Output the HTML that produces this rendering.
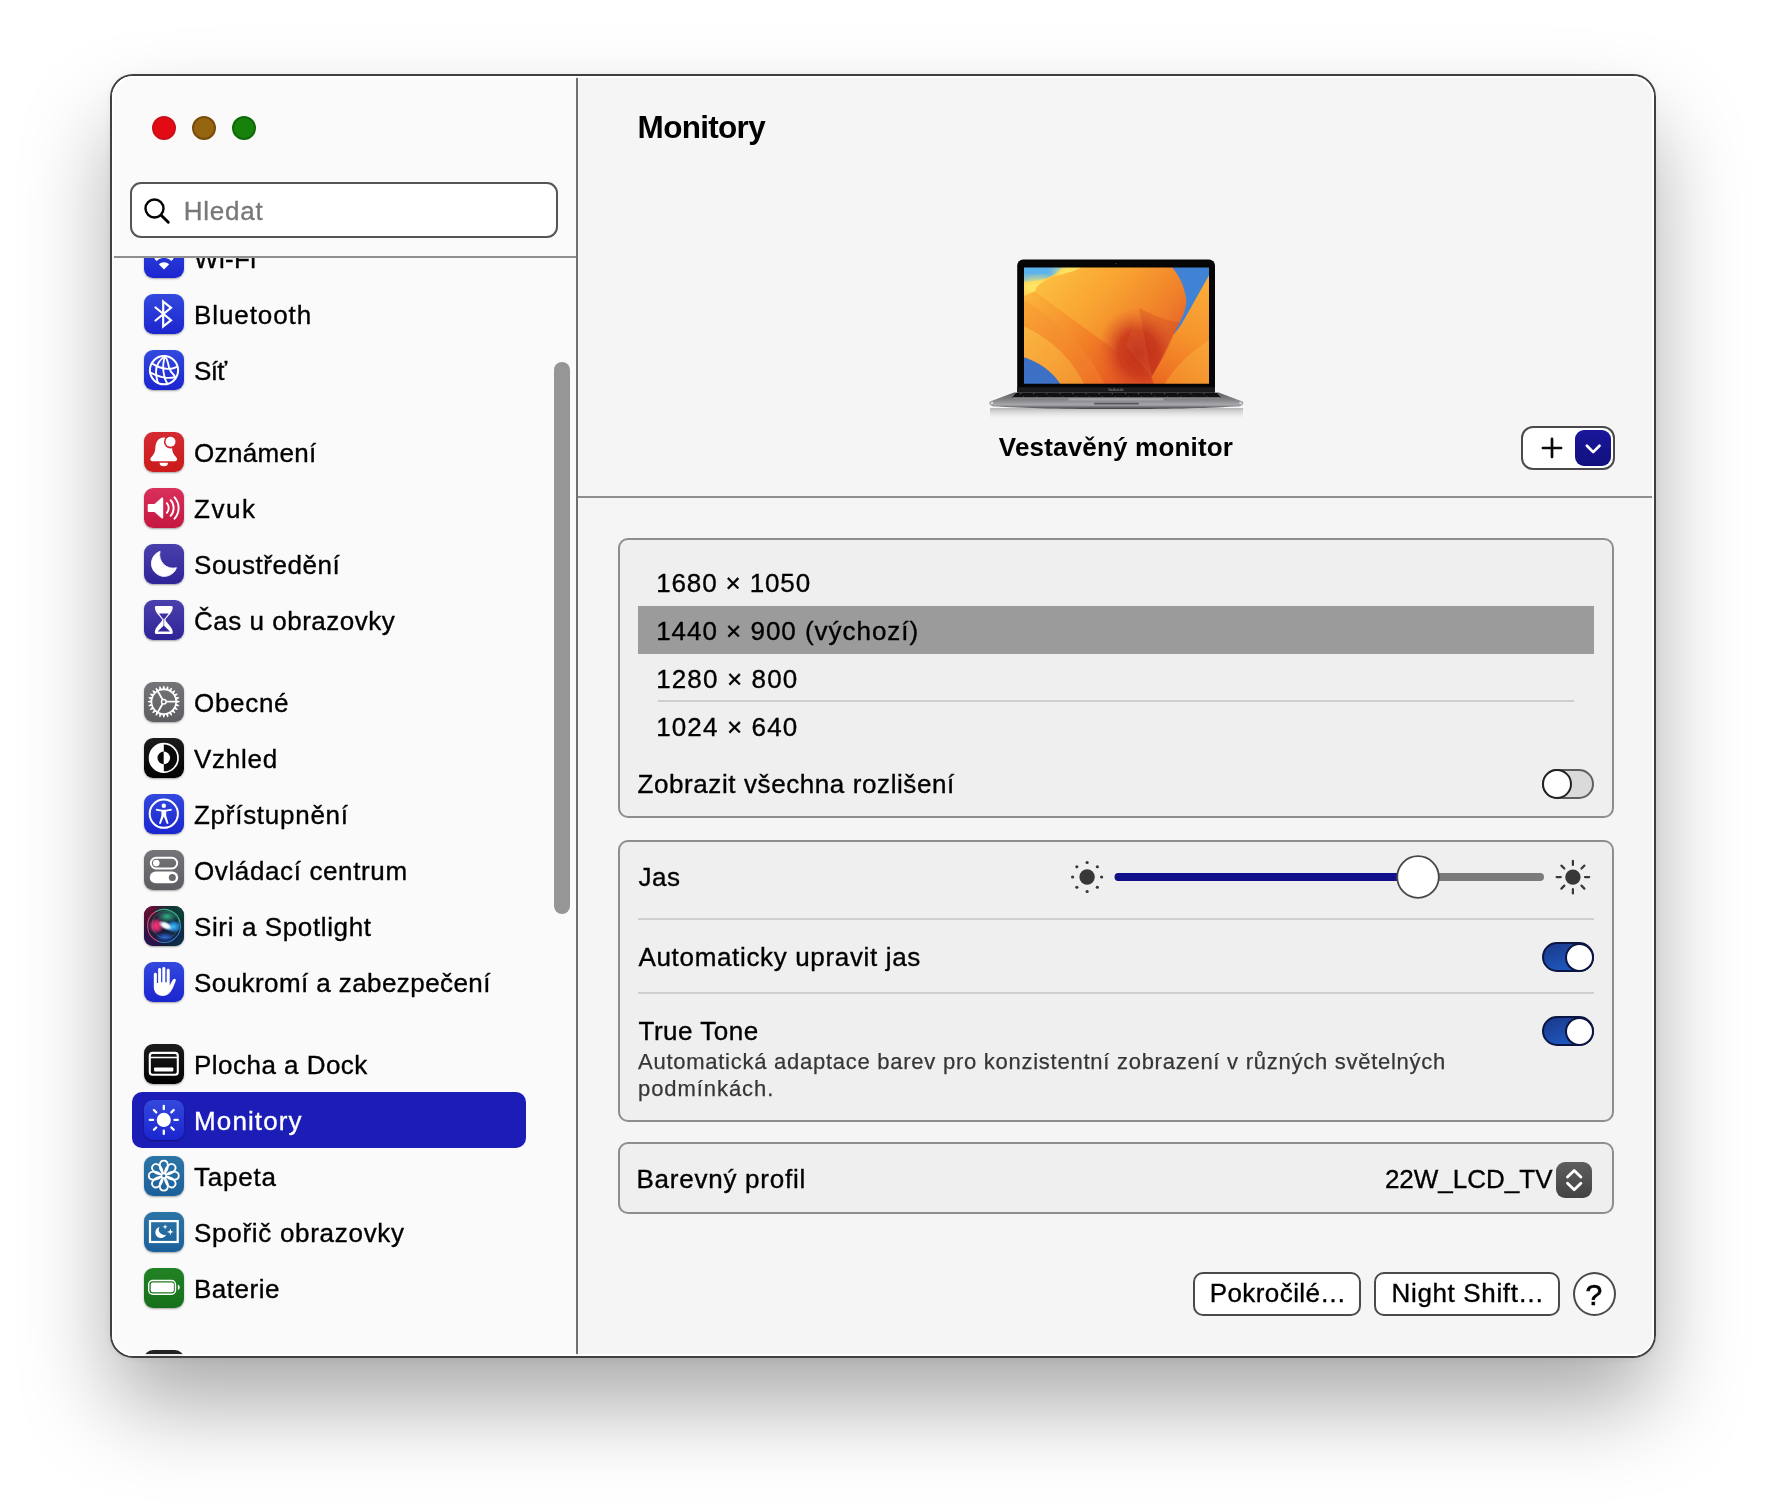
<!DOCTYPE html>
<html lang="cs">
<head>
<meta charset="utf-8">
<title>Monitory</title>
<style>
*{box-sizing:border-box;margin:0;padding:0}
html,body{width:1766px;height:1504px;background:#fff;overflow:hidden}
body{font-family:"Liberation Sans",sans-serif;color:#000;position:relative;-webkit-text-stroke:.35px currentColor}
.abs{position:absolute}
#shadow{position:absolute;left:110px;top:74px;width:1546px;height:1284px;border-radius:23px;
 box-shadow:0 1px 6px rgba(0,0,0,.06),0 49px 90px -4px rgba(0,0,0,.34)}
#win{will-change:transform;position:absolute;left:110px;top:74px;width:1546px;height:1284px;border-radius:23px;border:2px solid #404040;background:#f5f5f5;overflow:hidden}
#side{position:absolute;left:0;top:0;width:464px;height:1280px;background:#fafafa}
#vdiv{position:absolute;left:464px;top:0;width:2px;height:1280px;background:#707070}
.tl{position:absolute;top:40px;width:24px;height:24px;border-radius:50%}
#search{position:absolute;left:18px;top:106px;width:428px;height:56px;border:2px solid #555;border-radius:11px;background:#fff}
#search span{position:absolute;left:51.700px;top:12px;font-size:26px;color:#787878;letter-spacing:.76px}
#sdiv{position:absolute;left:0;top:180px;width:464px;height:2px;background:#8f8f8f}
#list{position:absolute;left:0;top:182px;width:464px;height:1098px;overflow:hidden}
.row{position:absolute;left:20px;width:394px;height:56px;border-radius:10px}
.row .ic{position:absolute;left:12px;top:8px;width:40px;height:40px;border-radius:9px;overflow:hidden;box-shadow:0 1px 2px rgba(0,0,0,.35)}
.row .ic svg{position:absolute;left:0;top:0;width:40px;height:40px}
.row .t{position:absolute;left:62px;top:13px;font-size:26px;line-height:32px;white-space:nowrap;letter-spacing:.35px}
.row.sel{background:#1c1cb6}
.row.sel .t{color:#fff}
#scroll{position:absolute;left:442px;top:286px;width:16px;height:552px;border-radius:8px;background:#969696}
#main{position:absolute;left:466px;top:0;width:1076px;height:1280px;background:#f5f5f5}
.grp{position:absolute;left:40px;width:996px;border:2px solid #8e8e8e;border-radius:10px;background:#efefef}
.lbl{position:absolute;font-size:26px;line-height:32px;white-space:nowrap;letter-spacing:.35px}
.hl{position:absolute;height:2px;background:#cfcfcf}
.tog{position:absolute;width:52px;height:30px;border-radius:15px}
.tog i{position:absolute;top:2px;width:27px;height:27px;border-radius:50%;background:#fff}
.btn{position:absolute;height:43px;border:2px solid #4a4a4a;border-radius:10px;background:#fff;font-size:26px;line-height:37px;text-align:center;white-space:nowrap;letter-spacing:.3px}
.el{letter-spacing:-1.6px;margin-left:-.5px}
#hi{position:absolute;left:0;top:0;width:1542px;height:1280px;border-radius:21px;box-shadow:inset 0 0 0 2px rgba(255,255,255,.92);z-index:9}
</style>
</head>
<body>
<div id="shadow"></div>
<div id="win">
 <div id="side">
  <div class="tl" style="left:40px;background:#e30b13;border:2px solid #cd0e18"></div>
  <div class="tl" style="left:80px;background:#94640f;border:2px solid #7a4c0b"></div>
  <div class="tl" style="left:120px;background:#16820b;border:2px solid #106a08"></div>
  <div id="search">
   <svg class="abs" style="left:9.800px;top:11.600px" width="30" height="30" viewBox="0 0 30 30"><circle cx="12.500" cy="12.500" r="9" fill="none" stroke="#000" stroke-width="2.400"/><path d="M19.200 19.200 L26.300 26.300" stroke="#000" stroke-width="2.900" stroke-linecap="round"/></svg>
   <span>Hledat</span>
  </div>
  <div id="sdiv"></div>
  <div id="list">
   <div class="row" style="top:-28px"><div class="ic"><svg viewBox="0 0 40 40"><defs><linearGradient id="gw" x1="0" y1="0" x2="0" y2="1"><stop offset="0" stop-color="#3349dd"/><stop offset="1" stop-color="#1b25cf"/></linearGradient></defs><rect width="40" height="40" fill="url(#gw)"/><g fill="none" stroke="#fff" stroke-width="3.2" stroke-linecap="butt"><path d="M6.5 16.5 A19 19 0 0 1 33.5 16.5"/><path d="M11.5 21.8 A12 12 0 0 1 28.5 21.8"/></g><path d="M20 31.5 L14.8 26.3 A7.4 7.4 0 0 1 25.2 26.3 Z" fill="#fff"/></svg></div><div class="t" style="letter-spacing:0.35px">Wi-Fi</div></div>
   <div class="row" style="top:28px"><div class="ic"><svg viewBox="0 0 40 40"><defs><linearGradient id="gb" x1="0" y1="0" x2="0" y2="1"><stop offset="0" stop-color="#3349dd"/><stop offset="1" stop-color="#1b25cf"/></linearGradient></defs><rect width="40" height="40" fill="url(#gb)"/><path d="M11.5 13.5 L27 26.2 L19.2 32.5 L19.2 7.5 L27 13.8 L11.5 26.5" fill="none" stroke="#fff" stroke-width="2.2" stroke-linejoin="miter" stroke-linecap="round"/></svg></div><div class="t" style="letter-spacing:0.92px">Bluetooth</div></div>
   <div class="row" style="top:84px"><div class="ic"><svg viewBox="0 0 40 40"><defs><linearGradient id="gn" x1="0" y1="0" x2="0" y2="1"><stop offset="0" stop-color="#3349dd"/><stop offset="1" stop-color="#1b25cf"/></linearGradient></defs><rect width="40" height="40" fill="url(#gn)"/><g fill="none" stroke="#fff" stroke-width="1.900" stroke-linecap="round"><circle cx="20" cy="20.200" r="14.100" stroke-width="2"/><path d="M21.100 6.300 C16.500 9 11.500 15 12 22 C12.300 27 13 30.500 14.200 33"/><path d="M21.100 6.300 C19.500 10 18.800 16 19.500 22 C20 27 21.500 31 23.200 33.600"/><path d="M21.100 6.300 C23.500 9.500 24.300 14 25 17.500 C26 21.500 28.500 24 30.500 25.800"/><path d="M8 13.400 C12.500 16.500 18 18.600 23.500 18.900 C27.500 19 30.500 18 33 16.800"/><path d="M5.900 22.400 C11 25 16.500 27.200 22 27.800 C25.500 28.100 28.500 27.800 31.300 27"/></g></svg></div><div class="t" style="letter-spacing:-0.66px">Síť</div></div>
   <div class="row" style="top:166px"><div class="ic"><svg viewBox="0 0 40 40"><defs><linearGradient id="gbe" x1="0" y1="0" x2="0" y2="1"><stop offset="0" stop-color="#d42a32"/><stop offset="1" stop-color="#cb1b1a"/></linearGradient></defs><rect width="40" height="40" fill="url(#gbe)"/><path d="M19.700 5.400 C14 5.400 11.600 10.500 11.400 15.500 C11.200 20 10 22.500 7 25.600 C5.800 26.900 6.200 29.200 8.200 29.200 H31.200 C33.200 29.200 33.600 26.900 32.400 25.600 C29.400 22.500 28.200 20 28 15.500 C27.800 10.500 25.400 5.400 19.700 5.400 Z" fill="#fff"/><path d="M15.600 30.800 h8.400 a4.200 3.500 0 0 1 -8.400 0 z" fill="#fff"/><circle cx="26.500" cy="9.800" r="6.600" fill="#d1252c"/><circle cx="26.500" cy="9.800" r="5" fill="#fff"/></svg></div><div class="t" style="letter-spacing:0.34px">Oznámení</div></div>
   <div class="row" style="top:222px"><div class="ic"><svg viewBox="0 0 40 40"><defs><linearGradient id="gs" x1="0" y1="0" x2="0" y2="1"><stop offset="0" stop-color="#d9305c"/><stop offset="1" stop-color="#c4183f"/></linearGradient></defs><rect width="40" height="40" fill="url(#gs)"/><path d="M5 16 h5.5 l7 -6.200 c.8 -.7 1.700 -.3 1.700 .8 v18.800 c0 1.100 -.9 1.500 -1.700 .8 l-7 -6.200 h-5.500 c-.8 0 -1.300 -.5 -1.300 -1.300 v-5.400 c0 -.8 .5 -1.300 1.300 -1.300 z" fill="#fff"/><g fill="none" stroke="#fff" stroke-width="1.9" stroke-linecap="round"><path d="M22.800 15.200 a7 7 0 0 1 0 9.600"/><path d="M26.600 12.200 a11.500 11.500 0 0 1 0 15.600"/><path d="M30.500 9.300 a16 16 0 0 1 0 21.400"/></g></svg></div><div class="t" style="letter-spacing:1.52px">Zvuk</div></div>
   <div class="row" style="top:278px"><div class="ic"><svg viewBox="0 0 40 40"><defs><linearGradient id="gm" x1="0" y1="0" x2="0" y2="1"><stop offset="0" stop-color="#4a40ac"/><stop offset="1" stop-color="#2f2498"/></linearGradient></defs><rect width="40" height="40" fill="url(#gm)"/><path d="M16.100 7.300 A12.900 12.900 0 1 0 32.500 23.700 A13.400 13.400 0 0 1 16.100 7.300 Z" fill="#fff" stroke="#fff" stroke-width=".8" stroke-linejoin="round"/></svg></div><div class="t" style="letter-spacing:0.56px">Soustředění</div></div>
   <div class="row" style="top:334px"><div class="ic"><svg viewBox="0 0 40 40"><defs><linearGradient id="gh" x1="0" y1="0" x2="0" y2="1"><stop offset="0" stop-color="#4a40ac"/><stop offset="1" stop-color="#2f2498"/></linearGradient></defs><rect width="40" height="40" fill="url(#gh)"/><path d="M12.300 5.900 H27.300 Q29 5.900 28.800 7.600 C28.400 13 23.200 16.500 21.300 20 C23.200 23.500 28.400 27 28.800 32.200 Q29 33.900 27.300 33.900 H12.300 Q10.600 33.900 10.800 32.200 C11.200 27 16.400 23.500 18.300 20 C16.400 16.500 11.200 13 10.800 7.600 Q10.600 5.900 12.300 5.900 Z" fill="#fff"/><path d="M15 13.600 H24.600 L20.700 18.700 H18.900 Z" fill="#3a2fa0"/><path d="M19.800 18.500 V26" stroke="#3a2fa0" stroke-width=".7" opacity=".8"/><path d="M19.800 25.600 L26 31.400 H13.600 Z" fill="#34289c"/></svg></div><div class="t" style="letter-spacing:0.51px">Čas u obrazovky</div></div>
   <div class="row" style="top:416px"><div class="ic"><svg viewBox="0 0 40 40"><defs><linearGradient id="gg" gradientUnits="userSpaceOnUse" x1="0" y1="0" x2="0" y2="40"><stop offset="0" stop-color="#747479"/><stop offset="1" stop-color="#5d5d62"/></linearGradient></defs><rect width="40" height="40" fill="url(#gg)"/><path d="M32.73 18.34 L35.70 19.30 L35.70 20.10 L32.73 21.06 L32.64 21.73 L35.26 23.43 L35.05 24.20 L31.94 24.36 L31.68 24.98 L33.76 27.30 L33.37 27.99 L30.32 27.34 L29.91 27.88 L31.32 30.66 L30.76 31.22 L27.98 29.81 L27.44 30.22 L28.09 33.27 L27.40 33.66 L25.08 31.58 L24.46 31.84 L24.30 34.95 L23.53 35.16 L21.83 32.54 L21.16 32.63 L20.20 35.60 L19.40 35.60 L18.44 32.63 L17.77 32.54 L16.07 35.16 L15.30 34.95 L15.14 31.84 L14.52 31.58 L12.20 33.66 L11.51 33.27 L12.16 30.22 L11.62 29.81 L8.84 31.22 L8.28 30.66 L9.69 27.88 L9.28 27.34 L6.23 27.99 L5.84 27.30 L7.92 24.98 L7.66 24.36 L4.55 24.20 L4.34 23.43 L6.96 21.73 L6.87 21.06 L3.90 20.10 L3.90 19.30 L6.87 18.34 L6.96 17.67 L4.34 15.97 L4.55 15.20 L7.66 15.04 L7.92 14.42 L5.84 12.10 L6.23 11.41 L9.28 12.06 L9.69 11.52 L8.28 8.74 L8.84 8.18 L11.62 9.59 L12.16 9.18 L11.51 6.13 L12.20 5.74 L14.52 7.82 L15.14 7.56 L15.30 4.45 L16.07 4.24 L17.77 6.86 L18.44 6.77 L19.40 3.80 L20.20 3.80 L21.16 6.77 L21.83 6.86 L23.53 4.24 L24.30 4.45 L24.46 7.56 L25.08 7.82 L27.40 5.74 L28.09 6.13 L27.44 9.18 L27.98 9.59 L30.76 8.18 L31.32 8.74 L29.91 11.52 L30.32 12.06 L33.37 11.41 L33.76 12.10 L31.68 14.42 L31.94 15.04 L35.05 15.20 L35.26 15.97 L32.64 17.67 Z" fill="#fff"/><circle cx="19.800" cy="19.700" r="11.500" fill="url(#gg)"/><rect x="8" y="8" width="24" height="24" fill="none"/><path d="M22.20 19.70 L31.80 19.70" stroke="#fff" stroke-width="1.8"/><path d="M18.60 21.78 L13.80 30.09" stroke="#fff" stroke-width="1.8"/><path d="M18.60 17.62 L13.80 9.31" stroke="#fff" stroke-width="1.8"/><circle cx="19.800" cy="19.700" r="2.300" fill="#6a6a6f" stroke="#fff" stroke-width="1.500"/></svg></div><div class="t" style="letter-spacing:0.7px">Obecné</div></div>
   <div class="row" style="top:472px"><div class="ic"><svg viewBox="0 0 40 40"><defs><linearGradient id="ga" x1="0" y1="0" x2="0" y2="1"><stop offset="0" stop-color="#1c1c1e"/><stop offset="1" stop-color="#000"/></linearGradient></defs><rect width="40" height="40" fill="url(#ga)"/><circle cx="19.800" cy="19.900" r="15.100" fill="#fff"/><path d="M19.800 6.500 a13.400 13.400 0 0 1 0 26.800 z" fill="#0a0a0a"/><path d="M19.800 13.600 a6.300 6.300 0 0 0 0 12.600 z" fill="#0a0a0a"/><path d="M19.800 13.600 a6.300 6.300 0 0 1 0 12.600 z" fill="#fff"/></svg></div><div class="t" style="letter-spacing:0.76px">Vzhled</div></div>
   <div class="row" style="top:528px"><div class="ic"><svg viewBox="0 0 40 40"><defs><linearGradient id="gac" x1="0" y1="0" x2="0" y2="1"><stop offset="0" stop-color="#3349dd"/><stop offset="1" stop-color="#1b25cf"/></linearGradient></defs><rect width="40" height="40" fill="url(#gac)"/><circle cx="19.800" cy="19.700" r="14.100" fill="none" stroke="#fff" stroke-width="2"/><circle cx="19.800" cy="11.700" r="2.200" fill="#fff"/><path transform="translate(-.2 -.5)" d="M12.300 15.300 l5.600 1 h4.200 l5.600 -1 l.3 1.600 l-5.600 1.200 v4.200 l2.400 7.600 l-1.700 .6 l-3.100 -7.400 l-3.100 7.400 l-1.700 -.6 l2.400 -7.600 v-4.200 l-5.600 -1.200 z" fill="#fff"/></svg></div><div class="t" style="letter-spacing:0.73px">Zpřístupnění</div></div>
   <div class="row" style="top:584px"><div class="ic"><svg viewBox="0 0 40 40"><defs><linearGradient id="gc" x1="0" y1="0" x2="0" y2="1"><stop offset="0" stop-color="#747479"/><stop offset="1" stop-color="#5d5d62"/></linearGradient></defs><rect width="40" height="40" fill="url(#gc)"/><rect x="6.800" y="7.800" width="26.400" height="10.600" rx="5.300" fill="none" stroke="#fff" stroke-width="2"/><circle cx="12.300" cy="13.100" r="3.300" fill="#fff"/><rect x="5.800" y="21.600" width="28.400" height="11.600" rx="5.800" fill="#fff"/><circle cx="28.300" cy="27.400" r="3.500" fill="#68686d"/></svg></div><div class="t" style="letter-spacing:0.62px">Ovládací centrum</div></div>
   <div class="row" style="top:640px"><div class="ic"><svg viewBox="0 0 40 40"><defs>
<radialGradient id="sq1" cx="0" cy="0" r="1"><stop offset="0" stop-color="#7a0c38"/><stop offset=".75" stop-color="#7a0c38" stop-opacity="0"/></radialGradient>
<radialGradient id="sq2" cx="1" cy="0" r="1"><stop offset="0" stop-color="#0c4a3c"/><stop offset=".75" stop-color="#0c4a3c" stop-opacity="0"/></radialGradient>
<radialGradient id="sq3" cx="0" cy="1" r="1"><stop offset="0" stop-color="#34105a"/><stop offset=".7" stop-color="#34105a" stop-opacity="0"/></radialGradient>
<radialGradient id="sq4" cx="1" cy="1" r="1"><stop offset="0" stop-color="#0a3450"/><stop offset=".7" stop-color="#0a3450" stop-opacity="0"/></radialGradient>
<radialGradient id="gs1"><stop offset="0" stop-color="#ff3474"/><stop offset=".55" stop-color="#f02c70" stop-opacity=".75"/><stop offset="1" stop-color="#e02a70" stop-opacity="0"/></radialGradient>
<radialGradient id="gs2"><stop offset="0" stop-color="#38c4ff"/><stop offset=".55" stop-color="#2a9cf4" stop-opacity=".75"/><stop offset="1" stop-color="#2a8cf0" stop-opacity="0"/></radialGradient>
<radialGradient id="gs3"><stop offset="0" stop-color="#fff"/><stop offset=".45" stop-color="#f2fbff" stop-opacity=".95"/><stop offset="1" stop-color="#b8f0ff" stop-opacity="0"/></radialGradient>
<radialGradient id="gs4"><stop offset="0" stop-color="#3ad49c" stop-opacity=".8"/><stop offset="1" stop-color="#2fc890" stop-opacity="0"/></radialGradient>
<radialGradient id="gs5"><stop offset="0" stop-color="#2c6cf4" stop-opacity=".9"/><stop offset="1" stop-color="#2c5cf0" stop-opacity="0"/></radialGradient>
<filter id="sbl" x="-20%" y="-20%" width="140%" height="140%"><feGaussianBlur stdDeviation=".5"/></filter></defs>
<rect width="40" height="40" fill="#15182c"/><rect width="40" height="40" fill="url(#sq1)"/><rect width="40" height="40" fill="url(#sq2)"/><rect width="40" height="40" fill="url(#sq3)"/><rect width="40" height="40" fill="url(#sq4)"/>
<circle cx="19.900" cy="19.900" r="16.200" fill="#18223c" opacity=".55"/>
<ellipse cx="23" cy="10.500" rx="11" ry="6.500" fill="url(#gs4)"/>
<ellipse cx="21" cy="31" rx="10" ry="5" fill="url(#gs5)"/>
<ellipse cx="12.300" cy="19.800" rx="8" ry="8" fill="url(#gs1)"/><ellipse cx="29.600" cy="20.600" rx="7.500" ry="6.500" fill="url(#gs2)"/>
<ellipse cx="21.600" cy="19.600" rx="8" ry="4.200" fill="url(#gs3)" transform="rotate(27 21.600 19.600)"/>
<g fill="none" stroke-width="1.100" filter="url(#sbl)" stroke-linecap="round"><path d="M14 35.200 A16.400 16.400 0 0 1 12 5.600" stroke="#e0506c" opacity=".9"/><path d="M12 5.600 A16.400 16.400 0 0 1 36 16" stroke="#3ccc94" opacity=".85"/><path d="M36 16 A16.400 16.400 0 0 1 14 35.200" stroke="#3c8cf0" opacity=".85"/><circle cx="21.500" cy="18.500" r="13.500" stroke="#48d4a0" stroke-width=".6" opacity=".45"/></g></svg></div><div class="t" style="letter-spacing:0.62px">Siri a Spotlight</div></div>
   <div class="row" style="top:696px"><div class="ic"><svg viewBox="0 0 40 40"><defs><linearGradient id="gha" x1="0" y1="0" x2="0" y2="1"><stop offset="0" stop-color="#3349dd"/><stop offset="1" stop-color="#1b25cf"/></linearGradient></defs><rect width="40" height="40" fill="url(#gha)"/><path d="M9.800 12.200 c0 -2 3.100 -2 3.100 0 V21 h1.200 V7.500 c0 -2 3 -2 3 0 V20.200 h1.200 V6.500 c0 -2 3 -2 3 0 V20.200 h1.400 V8.200 c0 -2 3 -2 3 0 V23.600 c1.200 -2.200 2.200 -4.400 3.400 -6 c1.100 -1.500 3.300 -.5 2.600 1.300 c-1.400 3.400 -2.600 7 -4.600 10.200 c-1.800 2.900 -4.400 4.800 -8.200 4.800 c-5.600 0 -9.100 -3.800 -9.100 -9 Z" fill="#fff"/></svg></div><div class="t" style="letter-spacing:0.42px">Soukromí a zabezpečení</div></div>
   <div class="row" style="top:778px"><div class="ic"><svg viewBox="0 0 40 40"><defs><linearGradient id="gd" x1="0" y1="0" x2="0" y2="1"><stop offset="0" stop-color="#1c1c1e"/><stop offset="1" stop-color="#000"/></linearGradient></defs><rect width="40" height="40" fill="url(#gd)"/><rect x="5.800" y="8.900" width="28" height="21.800" rx="2.800" fill="none" stroke="#fff" stroke-width="2.100"/><path d="M6 13.500 h27.600" stroke="#fff" stroke-width="1.600"/><rect x="10.100" y="23.400" width="19.200" height="4.200" rx=".8" fill="#fff"/></svg></div><div class="t" style="letter-spacing:0.47px">Plocha a Dock</div></div>
   <div class="row sel" style="top:834px"><div class="ic"><svg viewBox="0 0 40 40"><defs><linearGradient id="gsu" x1="0" y1="0" x2="0" y2="1"><stop offset="0" stop-color="#3349dd"/><stop offset="1" stop-color="#1b25cf"/></linearGradient></defs><rect width="40" height="40" fill="url(#gsu)"/><circle cx="19.800" cy="19.900" r="7.050" fill="#fff"/><g stroke="#fff" stroke-width="2.300" stroke-linecap="round"><path d="M30.50 19.90 L33.80 19.90"/><path d="M27.37 27.47 L29.70 29.80"/><path d="M19.80 30.60 L19.80 33.90"/><path d="M12.23 27.47 L9.90 29.80"/><path d="M9.10 19.90 L5.80 19.90"/><path d="M12.23 12.33 L9.90 10.00"/><path d="M19.80 9.20 L19.80 5.90"/><path d="M27.37 12.33 L29.70 10.00"/></g></svg></div><div class="t" style="letter-spacing:1.13px">Monitory</div></div>
   <div class="row" style="top:890px"><div class="ic"><svg viewBox="0 0 40 40"><defs><linearGradient id="gf" x1="0" y1="0" x2="0" y2="1"><stop offset="0" stop-color="#2c75a6"/><stop offset="1" stop-color="#1c609a"/></linearGradient></defs><rect width="40" height="40" fill="url(#gf)"/><g fill="none" stroke="#fff" stroke-width="1.800" stroke-linejoin="round"><path d="M19.800 18.200 C13.800 12.500 15 4.700 19.800 4.700 C24.600 4.700 25.800 12.500 19.800 18.200 Z" transform="rotate(0 19.800 19.700)"/><path d="M19.800 18.200 C13.800 12.500 15 4.700 19.800 4.700 C24.600 4.700 25.800 12.500 19.800 18.200 Z" transform="rotate(45 19.800 19.700)"/><path d="M19.800 18.200 C13.800 12.500 15 4.700 19.800 4.700 C24.600 4.700 25.800 12.500 19.800 18.200 Z" transform="rotate(90 19.800 19.700)"/><path d="M19.800 18.200 C13.800 12.500 15 4.700 19.800 4.700 C24.600 4.700 25.800 12.500 19.800 18.200 Z" transform="rotate(135 19.800 19.700)"/><path d="M19.800 18.200 C13.800 12.500 15 4.700 19.800 4.700 C24.600 4.700 25.800 12.500 19.800 18.200 Z" transform="rotate(180 19.800 19.700)"/><path d="M19.800 18.200 C13.800 12.500 15 4.700 19.800 4.700 C24.600 4.700 25.800 12.500 19.800 18.200 Z" transform="rotate(225 19.800 19.700)"/><path d="M19.800 18.200 C13.800 12.500 15 4.700 19.800 4.700 C24.600 4.700 25.800 12.500 19.800 18.200 Z" transform="rotate(270 19.800 19.700)"/><path d="M19.800 18.200 C13.800 12.500 15 4.700 19.800 4.700 C24.600 4.700 25.800 12.500 19.800 18.200 Z" transform="rotate(315 19.800 19.700)"/></g><circle cx="19.800" cy="19.700" r="2.600" fill="#fff"/><circle cx="19.800" cy="19.700" r="1.500" fill="#22689e"/></svg></div><div class="t" style="letter-spacing:0.78px">Tapeta</div></div>
   <div class="row" style="top:946px"><div class="ic"><svg viewBox="0 0 40 40"><defs><linearGradient id="gsa" x1="0" y1="0" x2="0" y2="1"><stop offset="0" stop-color="#2c75a6"/><stop offset="1" stop-color="#1c609a"/></linearGradient></defs><rect width="40" height="40" fill="url(#gsa)"/><rect x="6" y="9.100" width="27.700" height="20.900" fill="none" stroke="#fff" stroke-width="2.200"/><path d="M15.600 15 a5.600 5.600 0 1 0 6.600 7.400 a5.200 5.200 0 0 1 -6.600 -7.400 z" fill="#fff"/><path d="M26.300 16.500 l.8 2.600 l2.600 .8 l-2.600 .8 l-.8 2.600 l-.8 -2.600 l-2.600 -.8 l2.600 -.8 z" fill="#fff"/><path d="M21.100 12.200 l.65 1.950 l1.950 .65 l-1.950 .65 l-.65 1.950 l-.65 -1.950 l-1.950 -.65 l1.950 -.65 z" fill="#fff"/></svg></div><div class="t" style="letter-spacing:0.71px">Spořič obrazovky</div></div>
   <div class="row" style="top:1002px"><div class="ic"><svg viewBox="0 0 40 40"><defs><linearGradient id="gba" x1="0" y1="0" x2="0" y2="1"><stop offset="0" stop-color="#218224"/><stop offset="1" stop-color="#16701a"/></linearGradient></defs><rect width="40" height="40" fill="url(#gba)"/><rect x="4.700" y="12.500" width="26.800" height="13.800" rx="4" fill="none" stroke="#fff" stroke-width="1.400"/><rect x="6.700" y="14.600" width="23.200" height="9.700" rx="2.200" fill="#fff"/><path d="M33.900 16.800 c2.400 .6 2.400 4.600 0 5.200 z" fill="#fff"/></svg></div><div class="t" style="letter-spacing:0.52px">Baterie</div></div>
   <div class="row" style="top:1084px"><div class="ic"><svg viewBox="0 0 40 40"><rect width="40" height="40" fill="#232325"/></svg></div><div class="t" style="letter-spacing:0.35px"></div></div>
  </div>
  <div id="scroll"></div>
 </div>
 <div id="vdiv"></div>
 <div id="hi"></div>
 <div id="main">
  <div class="lbl" id="title" style="left:59.600px;top:33px;font-size:31.500px;line-height:36px;font-weight:bold;-webkit-text-stroke:0;letter-spacing:-.7px">Monitory</div>
  <svg class="abs" id="laptop" style="left:402px;top:174px" width="270" height="175" viewBox="0 0 270 175">
   <defs>
    <clipPath id="scr"><rect x="44" y="17.600" width="185" height="116.200"/></clipPath>
    <filter id="bl" x="-5%" y="-5%" width="110%" height="110%"><feGaussianBlur stdDeviation=".7"/></filter>
    <filter id="bl2" x="-20%" y="-20%" width="140%" height="140%"><feGaussianBlur stdDeviation="4"/></filter>
    <linearGradient id="w0" x1="0" y1="0" x2="1" y2="1"><stop offset="0" stop-color="#fdc844"/><stop offset=".4" stop-color="#f9a834"/><stop offset="1" stop-color="#f07a22"/></linearGradient>
    <linearGradient id="w1" gradientUnits="userSpaceOnUse" x1="70" y1="20" x2="185" y2="125"><stop offset="0" stop-color="#fcbe40"/><stop offset=".35" stop-color="#f9a431"/><stop offset=".7" stop-color="#f0802a"/><stop offset="1" stop-color="#e0542a"/></linearGradient>
    <radialGradient id="wr" cx=".5" cy=".55" r=".5"><stop offset="0" stop-color="#be2e1c"/><stop offset=".5" stop-color="#cb3a1e" stop-opacity=".9"/><stop offset="1" stop-color="#e0602a" stop-opacity="0"/></radialGradient>
    <linearGradient id="w3" gradientUnits="userSpaceOnUse" x1="230" y1="25" x2="185" y2="135"><stop offset="0" stop-color="#fbb03a"/><stop offset=".55" stop-color="#f6942c"/><stop offset="1" stop-color="#ec6a22"/></linearGradient>
    <linearGradient id="w4" gradientUnits="userSpaceOnUse" x1="50" y1="45" x2="165" y2="135"><stop offset="0" stop-color="#fbb23a"/><stop offset=".4" stop-color="#f58a2a"/><stop offset="1" stop-color="#de461c"/></linearGradient>
    <linearGradient id="w7" gradientUnits="userSpaceOnUse" x1="45" y1="55" x2="120" y2="135"><stop offset="0" stop-color="#f9a434"/><stop offset="1" stop-color="#ee7026"/></linearGradient>
    <linearGradient id="w5" gradientUnits="userSpaceOnUse" x1="45" y1="80" x2="100" y2="135"><stop offset="0" stop-color="#fbb440"/><stop offset="1" stop-color="#f39430"/></linearGradient>
    <linearGradient id="w6" gradientUnits="userSpaceOnUse" x1="230" y1="90" x2="190" y2="135"><stop offset="0" stop-color="#f9a636"/><stop offset="1" stop-color="#f28a2a"/></linearGradient>
    <linearGradient id="bs" x1="0" y1="0" x2="0" y2="1"><stop offset="0" stop-color="#5c5c60"/><stop offset=".45" stop-color="#858589"/><stop offset=".75" stop-color="#a9a9ad"/><stop offset=".88" stop-color="#6e6e72"/><stop offset="1" stop-color="#3c3c3e"/></linearGradient>
    <linearGradient id="rf" x1="0" y1="0" x2="0" y2="1"><stop offset="0" stop-color="#8e8e8e" stop-opacity=".6"/><stop offset="1" stop-color="#d8d8d8" stop-opacity="0"/></linearGradient>
   </defs>
   <!-- reflection -->
   <rect x="10" y="158" width="253" height="11" fill="url(#rf)"/>
   <!-- lid -->
   <path d="M37.200 142 V15.500 a6 6 0 0 1 6 -6 H229 a6 6 0 0 1 6 6 V142 Z" fill="#050505"/>
   <!-- wallpaper -->
   <g clip-path="url(#scr)"><g filter="url(#bl)">
    <rect x="40" y="14" width="195" height="125" fill="url(#w0)"/>
    <path d="M182 12 H236 V32 L194 84 Z" fill="#3f82d4"/>
    <path d="M40 12 H88 C80 22 72 27 61 29.800 C54 31.200 48 31.800 40 32.300 Z" fill="#5cb2ec"/>
    <ellipse cx="58" cy="37" rx="20" ry="9" fill="#ffe668" filter="url(#bl2)"/>
    <ellipse cx="98" cy="23" rx="24" ry="8" fill="#ffea6a" filter="url(#bl2)"/>
    <!-- left petals -->
    <path d="M40 48 L55.800 41 L172 127 L176 140 H125.400 C112 105 84 72 40 48 Z" fill="url(#w4)"/>
    <path d="M40 48 C84 72 112 105 127 140 H106 C95 112 72 88 40 75 Z" fill="url(#w7)"/>
    <path d="M40 75 C72 88 95 112 107 140 H83 C74 122 60 112 40 106 Z" fill="url(#w5)"/>
    <path d="M40 106 C60 112 74 122 84 140 H40 Z" fill="#3b70c4"/>
    <!-- top lobe -->
    <path d="M55.800 39.800 C57 34 66 28 92 21.400 C100 19 104 16 107 12 H187 C198 22 204.900 36 206.400 50.500 C206 62 200 72 195.700 80 L172 127 L56.500 43 C55.500 42 55.400 41 55.800 39.800 Z" fill="url(#w1)"/>
    <ellipse cx="157" cy="99" rx="40" ry="46" fill="url(#wr)" transform="rotate(-20 157 99)"/>
    <path d="M159 58 C175 66 190 72 200 72 L172 127 Z" fill="#b92c1a" opacity=".2"/>
    <path d="M159 58 L172 127 L146 96 Z" fill="#f08a3a" opacity=".12"/>
    <!-- right petal -->
    <path d="M236 13 L171.500 127.500 L176 140 H236 Z" fill="url(#w3)"/>
    <path d="M236 86 C212 100 194 116 181 140 H236 Z" fill="url(#w6)"/>
   </g></g>
   <!-- camera, label -->
   <circle cx="136" cy="13.600" r=".8" fill="#3a3a3a"/>
   <rect x="37.200" y="137.200" width="197.800" height="4.600" fill="#1b1b1d"/><text x="136" y="140.700" font-size="2.700" font-family="'Liberation Sans',sans-serif" fill="#8e8e92" text-anchor="middle" stroke="none" style="-webkit-text-stroke:0">MacBook Air</text>
   <!-- base -->
   <path d="M37.200 141.500 H235 V143 H37.200 Z" fill="#1c1c1e"/>
   <path d="M34 142.500 H238.500 L262.500 151.500 C264 153 263 155 260 156.200 C200 160 72 160 12.500 156.200 C9.500 155 8.500 153 10 151.500 Z" fill="url(#bs)"/>
   <path d="M36 143 H237 L241 147.800 H32 Z" fill="#101012"/><path d="M37 143.700 H236" stroke="#77777b" stroke-width=".8" stroke-dasharray="1.200 11.900" stroke-dashoffset="-3"/><path d="M34 146.600 H239" stroke="#5a5a5e" stroke-width=".7" stroke-dasharray="1 12.100" stroke-dashoffset="-9"/><path d="M33 147.800 H240" stroke="#b4b4b8" stroke-width=".7"/>
   <rect x="88.500" y="148.200" width="95" height="2.400" fill="#a4a4a8"/>
   <rect x="114" y="152.800" width="45" height="1.800" rx=".9" fill="#58585c"/>
   <circle cx="12" cy="153" r="1.300" fill="#d8d8dc"/><circle cx="260.500" cy="153" r="1.300" fill="#d8d8dc"/>
  </svg>

  <div class="lbl" id="vm" style="left:0;width:1076px;text-align:center;top:355px;font-weight:bold;-webkit-text-stroke:0;letter-spacing:.18px">Vestavěný monitor</div>
  <div class="btn" style="left:943px;top:350px;width:94px;height:44px;border-radius:12px">
   <svg class="abs" style="left:17.300px;top:7.900px" width="24" height="24" viewBox="0 0 24 24"><path d="M12 2.900 V21.100 M2.900 12 H21.100" stroke="#0a0a0a" stroke-width="2.700" stroke-linecap="round"/></svg>
   <div class="abs" style="left:52px;top:2px;width:36px;height:36px;border-radius:9px;background:linear-gradient(#1a169c,#11117c)"></div>
   <svg class="abs" style="left:52px;top:2px" width="36" height="36" viewBox="0 0 36 36"><path d="M11.900 15.700 L18.200 22.100 L24.500 15.700" fill="none" stroke="#fff" stroke-width="2.700" stroke-linecap="round" stroke-linejoin="round"/></svg>
  </div>
  <div class="hl" style="left:0;top:420px;width:1076px;background:#8f8f8f"></div>

  <!-- group 1 -->
  <div class="grp" style="top:462px;height:280px">
   <div class="abs" style="left:18px;top:66px;width:956px;height:48px;background:#9b9b9b"></div>
   <div class="lbl" id="r1" style="left:36.200px;top:27px;letter-spacing:.86px">1680 × 1050</div>
   <div class="lbl" id="r2" style="left:36.200px;top:75px;letter-spacing:.97px">1440 × 900 (výchozí)</div>
   <div class="lbl" id="r3" style="left:36.200px;top:123px;letter-spacing:1.13px">1280 × 800</div>
   <div class="hl" style="left:38px;top:160px;width:916px"></div>
   <div class="lbl" id="r4" style="left:36.200px;top:171px;letter-spacing:1.13px">1024 × 640</div>
   <div class="lbl" id="r5" style="left:17.500px;top:228px;letter-spacing:.59px">Zobrazit všechna rozlišení</div>
   <div class="tog" style="left:922px;top:229px;background:#dadada;border:2px solid #5e5e5e"><i style="left:-2px;top:-2px;width:30px;height:30px;border:2px solid #222"></i></div>
  </div>

  <!-- group 2 -->
  <div class="grp" style="top:764px;height:282px">
   <div class="lbl" id="j1" style="left:18.500px;top:18.500px;letter-spacing:.55px">Jas</div>
   <svg class="abs" style="left:430px;top:8px" width="560" height="56" viewBox="0 0 560 56">
    <g fill="#383838"><circle cx="37.100" cy="27" r="7.700"/>
     <circle cx="37.100" cy="12.500" r="1.600"/><circle cx="37.100" cy="41.500" r="1.600"/><circle cx="22.600" cy="27" r="1.600"/><circle cx="51.600" cy="27" r="1.600"/><circle cx="26.850" cy="16.750" r="1.600"/><circle cx="47.350" cy="16.750" r="1.600"/><circle cx="26.850" cy="37.250" r="1.600"/><circle cx="47.350" cy="37.250" r="1.600"/></g>
    <rect x="64.600" y="23" width="429.400" height="8" rx="4" fill="#7b7b7b"/>
    <rect x="64.600" y="23" width="310" height="8" rx="4" fill="#10108a"/>
    <circle cx="368" cy="27" r="20.800" fill="#fff" stroke="#484848" stroke-width="1.800"/>
    <g fill="#383838" stroke="#383838" stroke-width="2.200" stroke-linecap="round"><circle cx="522.900" cy="27.100" r="7.700" stroke="none"/>
     <path d="M522.900 10.800 v4.200 M522.900 39.200 v4.200 M506.600 27.100 h4.200 M535 27.100 h4.200 M511.400 15.600 l2.950 2.950 M531.450 35.650 l2.950 2.950 M511.400 38.600 l2.950 -2.950 M531.450 18.550 l2.950 -2.950"/></g>
   </svg>

   <div class="hl" style="left:18px;top:76px;width:956px"></div>
   <div class="lbl" id="j2" style="left:18.500px;top:98.500px;letter-spacing:.66px">Automaticky upravit jas</div>
   <div class="tog" style="left:922px;top:100px;background:linear-gradient(160deg,#1b3c90 10%,#1f5cc6 90%);border:2px solid #0b1542"><i style="left:21px;top:-1.500px;width:29px;height:29px;border:2px solid #0b1542"></i></div>
   <div class="hl" style="left:18px;top:150px;width:956px"></div>
   <div class="lbl" id="j3" style="left:18.500px;top:172.500px;letter-spacing:.51px">True Tone</div>
   <div class="tog" style="left:922px;top:174px;background:linear-gradient(160deg,#1b3c90 10%,#1f5cc6 90%);border:2px solid #0b1542"><i style="left:21px;top:-1.500px;width:29px;height:29px;border:2px solid #0b1542"></i></div>
   <div class="lbl" id="j4" style="left:18px;top:205.500px;font-size:22px;line-height:27px;color:#363636;white-space:normal;width:900px;letter-spacing:.74px;-webkit-text-stroke:.25px currentColor">Automatická adaptace barev pro konzistentní zobrazení v různých světelných<br><span style="letter-spacing:.93px">podmínkách.</span></div>
  </div>

  <!-- group 3 -->
  <div class="grp" style="top:1066px;height:72px">
   <div class="lbl" id="p1" style="left:16.500px;top:18.500px;letter-spacing:.75px">Barevný profil</div>
   <div class="lbl" id="prof" style="right:59.500px;top:18.500px;letter-spacing:0px">22W_LCD_TV</div>
   <div class="abs" style="left:936px;top:18px;width:36px;height:36px;border-radius:9px;background:linear-gradient(#5e5e5e,#434343)"></div>
   <svg class="abs" style="left:936px;top:18px" width="36" height="36" viewBox="0 0 36 36"><path d="M11.500 15.100 L18.200 8.500 L24.900 15.100 M11.500 21.200 L18.200 27.800 L24.900 21.200" fill="none" stroke="#fff" stroke-width="2.800" stroke-linecap="round" stroke-linejoin="round"/></svg>
  </div>

  <div class="btn" style="left:615px;top:1196px;width:168px;height:44px;line-height:39px"><span id="b1" style="letter-spacing:.42px">Pokročilé<span class="el">…</span></span></div>
  <div class="btn" style="left:796px;top:1196px;width:186px;height:44px;line-height:39px"><span id="b2" style="letter-spacing:.64px">Night Shift<span class="el">…</span></span></div>
  <div class="btn" style="left:994.500px;top:1196px;width:43px;height:44px;border-radius:50%;font-size:30px;line-height:41px;-webkit-text-stroke:.7px #000"><span id="q">?</span></div>

 </div>
</div>
</body>
</html>
